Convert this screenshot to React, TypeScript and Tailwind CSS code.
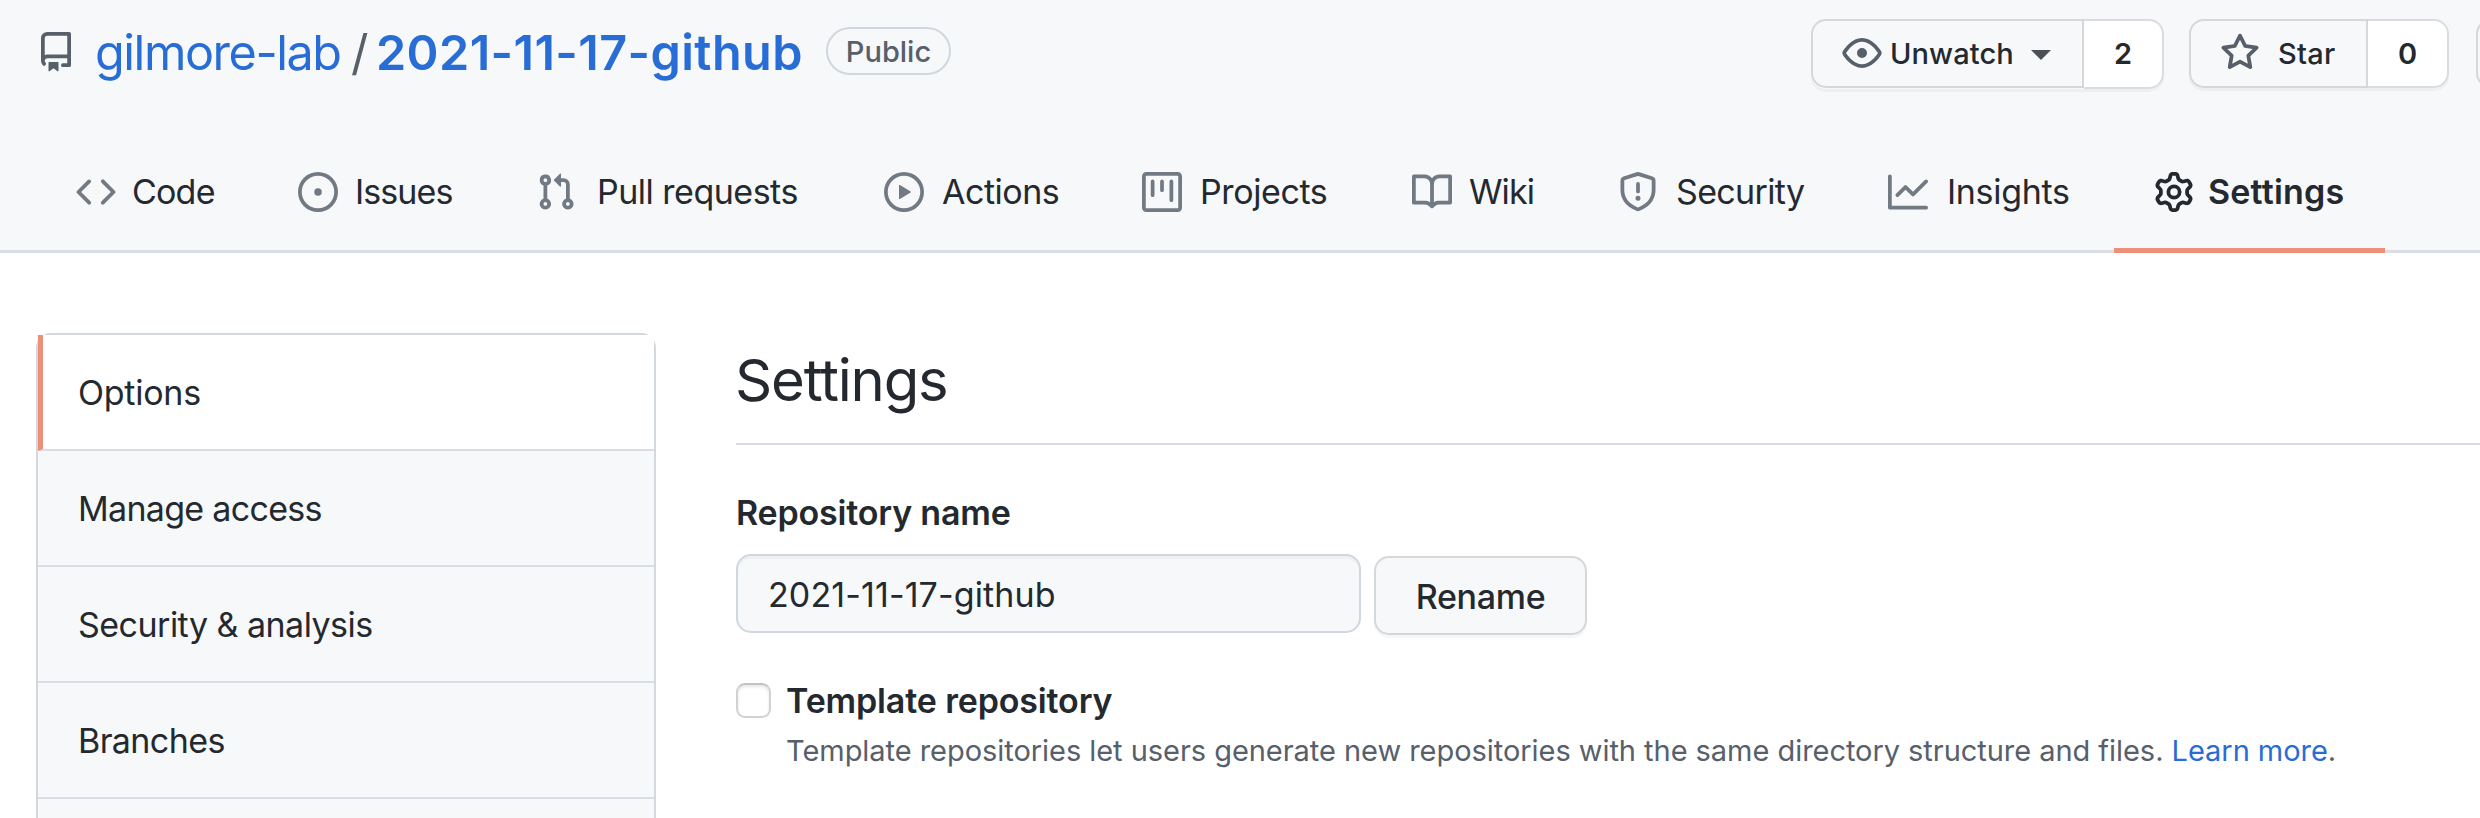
import React from "react";

type IconProps = { d: string; className?: string };

function Icon({ d, className = "" }: IconProps) {
  return (
    <svg viewBox="0 0 16 16" className={`size-10 shrink-0 fill-current ${className}`} aria-hidden="true">
      <path fillRule="evenodd" d={d} />
    </svg>
  );
}

const icons = {
  repo: "M2 2.5A2.5 2.5 0 014.5 0h8.75a.75.75 0 01.75.75v12.5a.75.75 0 01-.75.75h-2.5a.75.75 0 110-1.5h1.75v-2h-8a1 1 0 00-.714 1.7.75.75 0 01-1.072 1.05A2.495 2.495 0 012 11.5v-9zm10.5-1V9h-8c-.356 0-.694.074-1 .208V2.5a1 1 0 011-1h8zM5 12.25v3.25a.25.25 0 00.4.2l1.45-1.087a.25.25 0 01.3 0L8.6 15.7a.25.25 0 00.4-.2v-3.25a.25.25 0 00-.25-.25h-3.5a.25.25 0 00-.25.25z",
  code: "M4.72 3.22a.75.75 0 011.06 1.06L2.06 8l3.72 3.72a.75.75 0 11-1.06 1.06L.47 8.53a.75.75 0 010-1.06l4.25-4.25zm6.56 0a.75.75 0 10-1.06 1.06L13.94 8l-3.72 3.72a.75.75 0 101.06 1.06l4.25-4.25a.75.75 0 000-1.06l-4.25-4.25z",
  issue: "M8 9.5a1.5 1.5 0 100-3 1.5 1.5 0 000 3zM8 0a8 8 0 100 16A8 8 0 008 0zM1.5 8a6.5 6.5 0 1113 0 6.5 6.5 0 01-13 0z",
  pull: "M7.177 3.073L9.573.677A.25.25 0 0110 .854v4.792a.25.25 0 01-.427.177L7.177 3.427a.25.25 0 010-.354zM3.75 2.5a.75.75 0 100 1.5.75.75 0 000-1.5zm-2.25.75a2.25 2.25 0 113 2.122v5.256a2.251 2.251 0 11-1.5 0V5.372A2.25 2.25 0 011.5 3.25zM11 2.5h-1V4h1a1 1 0 011 1v5.628a2.251 2.251 0 101.5 0V5A2.5 2.5 0 0011 2.5zm1 10.25a.75.75 0 111.5 0 .75.75 0 01-1.5 0zM3.75 12a.75.75 0 100 1.5.75.75 0 000-1.5z",
  play: "M1.5 8a6.5 6.5 0 1113 0 6.5 6.5 0 01-13 0zM8 0a8 8 0 100 16A8 8 0 008 0zM6.379 5.227A.25.25 0 006 5.442v5.117a.25.25 0 00.379.214l4.264-2.559a.25.25 0 000-.428L6.379 5.227z",
  project: "M1.75 0A1.75 1.75 0 000 1.75v12.5C0 15.216.784 16 1.75 16h12.5A1.75 1.75 0 0016 14.25V1.75A1.75 1.75 0 0014.25 0H1.75zM1.5 1.75a.25.25 0 01.25-.25h12.5a.25.25 0 01.25.25v12.5a.25.25 0 01-.25.25H1.75a.25.25 0 01-.25-.25V1.75zM11.75 3a.75.75 0 00-.75.75v7.5a.75.75 0 001.5 0v-7.5a.75.75 0 00-.75-.75zm-8.25.75a.75.75 0 011.5 0v5.5a.75.75 0 01-1.5 0v-5.5zM8 3a.75.75 0 00-.75.75v3.5a.75.75 0 001.5 0v-3.5A.75.75 0 008 3z",
  book: "M0 1.75A.75.75 0 01.75 1h4.253c1.227 0 2.317.59 3 1.501A3.744 3.744 0 0111.006 1h4.245a.75.75 0 01.75.75v10.5a.75.75 0 01-.75.75h-4.507a2.25 2.25 0 00-1.591.659l-.622.621a.75.75 0 01-1.06 0l-.622-.621A2.25 2.25 0 005.258 13H.75a.75.75 0 01-.75-.75V1.75zm8.755 3a2.25 2.25 0 012.25-2.25H14.5v9h-3.757c-.71 0-1.4.201-1.992.572l.004-7.322zm-1.504 7.324l.004-5.073-.002-2.253A2.25 2.25 0 005.003 2.5H1.5v9h3.757a3.75 3.75 0 011.994.574z",
  shield: "M7.467.133a1.75 1.75 0 011.066 0l5.25 1.68A1.75 1.75 0 0115 3.48V7c0 1.566-.32 3.182-1.303 4.682-.983 1.498-2.585 2.813-5.032 3.855a1.7 1.7 0 01-1.33 0c-2.447-1.042-4.049-2.357-5.032-3.855C1.32 10.182 1 8.566 1 7V3.48a1.75 1.75 0 011.217-1.667l5.25-1.68zm.61 1.429a.25.25 0 00-.153 0l-5.25 1.68a.25.25 0 00-.174.238V7c0 1.358.275 2.666 1.057 3.86.784 1.194 2.121 2.34 4.366 3.297a.2.2 0 00.154 0c2.245-.956 3.582-2.104 4.366-3.298C13.225 9.666 13.5 8.36 13.5 7V3.48a.25.25 0 00-.174-.237l-5.25-1.68zM9 10.5a1 1 0 11-2 0 1 1 0 012 0zm-.25-5.75a.75.75 0 10-1.5 0v3a.75.75 0 001.5 0v-3z",
  graph: "M1.5 1.75a.75.75 0 00-1.5 0v12.5c0 .414.336.75.75.75h14.5a.75.75 0 000-1.5H1.5V1.75zm14.28 2.53a.75.75 0 00-1.06-1.06L10 7.94 7.53 5.47a.75.75 0 00-1.06 0L3.22 8.72a.75.75 0 001.06 1.06L7 7.06l2.47 2.47a.75.75 0 001.06 0l5.25-5.25z",
  gear: "M7.429 1.525a6.593 6.593 0 011.142 0c.036.003.108.036.137.146l.289 1.105c.147.56.55.967.997 1.189.174.086.341.183.501.29.417.278.97.423 1.53.27l1.102-.303c.11-.03.175.016.195.046.219.31.41.641.573.989.014.031.022.11-.059.19l-.815.806c-.411.406-.562.957-.53 1.456a4.588 4.588 0 010 .582c-.032.499.119 1.05.53 1.456l.815.806c.08.08.073.159.059.19a6.494 6.494 0 01-.573.99c-.02.029-.086.074-.195.045l-1.103-.303c-.559-.153-1.112-.008-1.529.27-.16.107-.327.204-.5.29-.449.222-.851.628-.998 1.189l-.289 1.105c-.029.11-.101.143-.137.146a6.613 6.613 0 01-1.142 0c-.036-.003-.108-.037-.137-.146l-.289-1.105c-.147-.56-.55-.967-.997-1.189a4.502 4.502 0 01-.501-.29c-.417-.278-.97-.423-1.53-.27l-1.102.303c-.11.03-.175-.016-.195-.046a6.492 6.492 0 01-.573-.989c-.014-.031-.022-.11.059-.19l.815-.806c.411-.406.562-.957.53-1.456a4.587 4.587 0 010-.582c.032-.499-.119-1.05-.53-1.456l-.815-.806c-.08-.08-.073-.159-.059-.19a6.44 6.44 0 01.573-.99c.02-.029.086-.075.195-.045l1.103.303c.559.153 1.112.008 1.529-.27.16-.107.327-.204.5-.29.449-.222.851-.628.998-1.189l.289-1.105c.029-.11.101-.143.137-.146zM8 0c-.236 0-.47.01-.701.03-.743.065-1.29.615-1.458 1.261l-.29 1.106c-.017.066-.078.158-.211.224a5.994 5.994 0 00-.668.386c-.123.082-.233.09-.3.071L3.27 2.776c-.644-.177-1.392.02-1.82.63a7.977 7.977 0 00-.704 1.217c-.315.675-.111 1.422.363 1.891l.815.806c.05.048.098.147.088.294a6.084 6.084 0 000 .772c.01.147-.038.246-.088.294l-.815.806c-.474.469-.678 1.216-.363 1.891.2.428.436.835.704 1.218.428.609 1.176.806 1.82.63l1.103-.303c.066-.019.176-.011.299.071.213.143.436.272.668.386.133.066.194.158.212.224l.289 1.106c.169.646.715 1.196 1.458 1.26a8.094 8.094 0 001.402 0c.743-.064 1.29-.614 1.458-1.26l.29-1.106c.017-.066.078-.158.211-.224a5.98 5.98 0 00.668-.386c.123-.082.233-.09.3-.071l1.102.302c.644.177 1.392-.02 1.82-.63.268-.382.505-.789.704-1.217.315-.675.111-1.422-.364-1.891l-.814-.806c-.05-.048-.098-.147-.088-.294a6.1 6.1 0 000-.772c-.01-.147.039-.246.088-.294l.814-.806c.475-.469.679-1.216.364-1.891a7.992 7.992 0 00-.704-1.218c-.428-.609-1.176-.806-1.82-.63l-1.103.303c-.066.019-.176.011-.299-.071a5.991 5.991 0 00-.668-.386c-.133-.066-.194-.158-.212-.224L10.16 1.29C9.99.645 9.444.095 8.701.031A8.094 8.094 0 008 0zm1.5 8a1.5 1.5 0 11-3 0 1.5 1.5 0 013 0zM11 8a3 3 0 11-6 0 3 3 0 016 0z",
  eye: "M1.679 7.932c.412-.621 1.242-1.75 2.366-2.717C5.175 4.242 6.527 3.5 8 3.5c1.473 0 2.824.742 3.955 1.715 1.124.967 1.954 2.096 2.366 2.717a.119.119 0 010 .136c-.412.621-1.242 1.75-2.366 2.717C10.825 11.758 9.473 12.5 8 12.5c-1.473 0-2.824-.742-3.955-1.715C2.92 9.818 2.09 8.69 1.679 8.068a.119.119 0 010-.136zM8 2c-1.981 0-3.67.992-4.933 2.078C1.797 5.169.88 6.423.43 7.1a1.619 1.619 0 000 1.798c.45.678 1.367 1.932 2.637 3.024C4.329 13.008 6.019 14 8 14c1.981 0 3.67-.992 4.933-2.078 1.27-1.091 2.187-2.345 2.637-3.023a1.619 1.619 0 000-1.798c-.45-.678-1.367-1.932-2.637-3.023C11.671 2.992 9.981 2 8 2zm0 8a2 2 0 100-4 2 2 0 000 4z",
  star: "M8 .25a.75.75 0 01.673.418l1.882 3.815 4.21.612a.75.75 0 01.416 1.279l-3.046 2.97.719 4.192a.75.75 0 01-1.088.791L8 12.347l-3.766 1.98a.75.75 0 01-1.088-.79l.72-4.194L.818 6.374a.75.75 0 01.416-1.28l4.21-.611L7.327.668A.75.75 0 018 .25zm0 2.445L6.615 5.5a.75.75 0 01-.564.41l-3.097.45 2.24 2.184a.75.75 0 01.216.664l-.528 3.084 2.769-1.456a.75.75 0 01.698 0l2.77 1.456-.53-3.084a.75.75 0 01.216-.664l2.24-2.183-3.096-.45a.75.75 0 01-.564-.41L8 2.694v.001z",
};

const tabs = [
  { label: "Code", icon: icons.code, box: "w-[222px]", text: "ml-4 tracking-[-0.8px]" },
  { label: "Issues", icon: icons.issue, box: "w-[238px]", text: "ml-[17px] tracking-[-0.9px]" },
  { label: "Pull requests", icon: icons.pull, box: "w-[348px]", text: "ml-[21px] tracking-[-0.5px]" },
  { label: "Actions", icon: icons.play, box: "w-[258px]", text: "ml-[18px] tracking-[-0.5px]" },
  { label: "Projects", icon: icons.project, box: "w-[270px]", text: "ml-[18px] tracking-[-0.4px]" },
  { label: "Wiki", icon: icons.book, box: "w-[206px]", text: "ml-[17px] tracking-[-0.9px]" },
  { label: "Security", icon: icons.shield, box: "w-[270px]", text: "ml-[18px] tracking-[-0.65px]" },
  { label: "Insights", icon: icons.graph, box: "w-[266px]", text: "ml-[19px] tracking-[-0.3px]" },
  { label: "Settings", icon: icons.gear, box: "w-[271px]", text: "ml-[14px] tracking-[0.2px]", active: true },
];

const sections = [
  { label: "Options", text: "tracking-[-0.25px]", active: true },
  { label: "Manage access", text: "tracking-[-0.7px]" },
  { label: "Security & analysis", text: "tracking-[-0.52px]" },
  { label: "Branches", text: "tracking-[-0.6px]" },
  { label: "", text: "" },
];

function RepoActions() {
  return (
    <div className="mt-[3px] flex h-[70px] items-start text-[29px] leading-none font-medium text-[#24292f]">
      <div className="flex rounded-[15px] shadow-[0_3px_0_rgba(27,31,36,0.04)]">
        <button className="flex h-[69px] w-[273px] items-center rounded-l-[15px] border-2 border-[#d5d8da] bg-[#f6f8fa] pl-[29px]">
          <Icon d={icons.eye} className="text-[#57606a]" />
          <span className="ml-2 w-[140px] text-left tracking-[0.1px]">Unwatch</span>
          <span className="mt-1 ml-px border-x-[10px] border-t-[10px] border-x-transparent border-t-[#4a5056]" />
        </button>
        <span className="flex h-[70px] w-20 items-center justify-center rounded-r-[15px] border-y-2 border-r-2 border-[#dadcdf] bg-white font-semibold">2</span>
      </div>
      <div className="ml-[25px] flex rounded-[15px] shadow-[0_3px_0_rgba(27,31,36,0.04)]">
        <button className="flex h-[69px] w-[179px] items-center rounded-l-[15px] border-2 border-[#d5d8da] bg-[#f6f8fa] pl-[29px]">
          <Icon d={icons.star} className="text-[#57606a]" />
          <span className="ml-[18px] tracking-[0.3px]">Star</span>
        </button>
        <span className="flex h-[69px] w-[81px] items-center justify-center rounded-r-[15px] border-y-2 border-r-2 border-[#dadcdf] bg-white font-semibold">0</span>
      </div>
      <div className="ml-[27px] h-[69px] w-1 overflow-hidden">
        <div className="h-full w-20 rounded-[15px] border-2 border-[#d5d8da] bg-[#f6f8fa]" />
      </div>
    </div>
  );
}

export default function App() {
  return (
    <div className="h-[818px] w-[2480px] overflow-hidden bg-white font-['Inter','Liberation_Sans',sans-serif] text-[34px] font-[430] whitespace-nowrap text-[#24292f]">
      <header className="flex h-[253px] flex-col bg-[#f6f8fa] shadow-[inset_0_-3px_0_#d8dee4]">
        <div className="flex h-[104px] items-center justify-between pl-9">
          <div className="flex items-center">
            <Icon d={icons.repo} className="text-[#57606a]" />
            <h1 className="flex items-center pt-[2px] text-[48.5px] leading-[60px] font-[430] text-[#286cd6]">
              <a className="ml-[19px] w-[256px] tracking-[-1.45px]">gilmore-lab</a>
              <span className="w-[25px] text-[#57606a]">/</span>
              <a className="w-[428px] font-semibold tracking-[0.4px]">2021-11-17-github</a>
            </h1>
            <span className="mb-[2px] ml-[22px] flex h-12 w-[125px] items-center justify-center rounded-full border-2 border-[#d0d7de] text-[29px] leading-none font-medium text-[#57606a]">
              Public
            </span>
          </div>
          <RepoActions />
        </div>
        <nav className="mt-[30px] flex h-[119px] pl-9">
          {tabs.map((t) => (
            <a
              key={t.label}
              className={`flex shrink-0 items-center border-b-[5px] pt-[2px] pl-10 ${t.box} ${
                t.active ? "border-[#ee8f79] font-semibold" : "border-transparent"
              }`}
            >
              <Icon d={t.icon} className={t.active ? "" : "text-[#717983]"} />
              <span className={`mb-[2px] ${t.text}`}>{t.label}</span>
            </a>
          ))}
        </nav>
      </header>

      <div className="flex pt-20 pl-9">
        <aside className="h-[600px] w-[620px] shrink-0 rounded-[15px] border-2 border-[#d2d8de]">
          {sections.map((s, i) => (
            <a
              key={i}
              className={`flex h-[116px] items-center border-b-2 border-b-[#d8dee4] ${
                s.active ? "border-l-[5px] border-l-[#ee8f79] bg-white pl-[35px]" : "bg-[#f6f8fa] pl-10"
              }`}
            >
              <span className={s.text}>{s.label}</span>
            </a>
          ))}
        </aside>

        <main className="ml-20 grow">
          <h2 className="h-[112px] border-b-2 border-[#d8dee4] text-[58px] leading-[95px] font-[430] tracking-[-1.2px]">
            <span className="-ml-px">Settings</span>
          </h2>
          <label className="mt-11 block h-[47px] leading-[48px] font-semibold tracking-[-0.18px]">Repository name</label>
          <div className="mt-[18px] flex">
            <input
              defaultValue="2021-11-17-github"
              className="h-[79px] w-[625px] rounded-[15px] border-2 border-[#d0d7de] bg-[#f6f8fa] px-[30px] pt-[2px] tracking-[0.12px] shadow-[inset_0_3px_0_rgba(208,215,222,0.2)]"
            />
            <button className="mt-[2px] ml-[13px] h-[79px] w-[213px] rounded-[15px] border-2 border-[#d5d8da] bg-[#f6f8fa] pt-px font-medium tracking-[-0.3px] shadow-[0_3px_0_rgba(27,31,36,0.04)]">
              Rename
            </button>
          </div>
          <div className="mt-[42px] flex">
            <span className="mt-[6px] size-[35px] rounded-[9px] border-2 border-[#d2d2d2] border-t-[#c2c2c2] bg-white shadow-[inset_0_2px_3px_rgba(0,0,0,0.1)]" />
            <div className="ml-[15px]">
              <h3 className="leading-[48px] font-semibold tracking-[-0.15px]">Template repository</h3>
              <p className="mt-[3px] text-[29px] leading-[45px] tracking-[-0.045px] text-[#57606a]">
                Template repositories let users generate new repositories with the same directory structure and files.{" "}
                <a className="text-[#286cd6]">Learn more</a>.
              </p>
            </div>
          </div>
        </main>
      </div>
    </div>
  );
}
